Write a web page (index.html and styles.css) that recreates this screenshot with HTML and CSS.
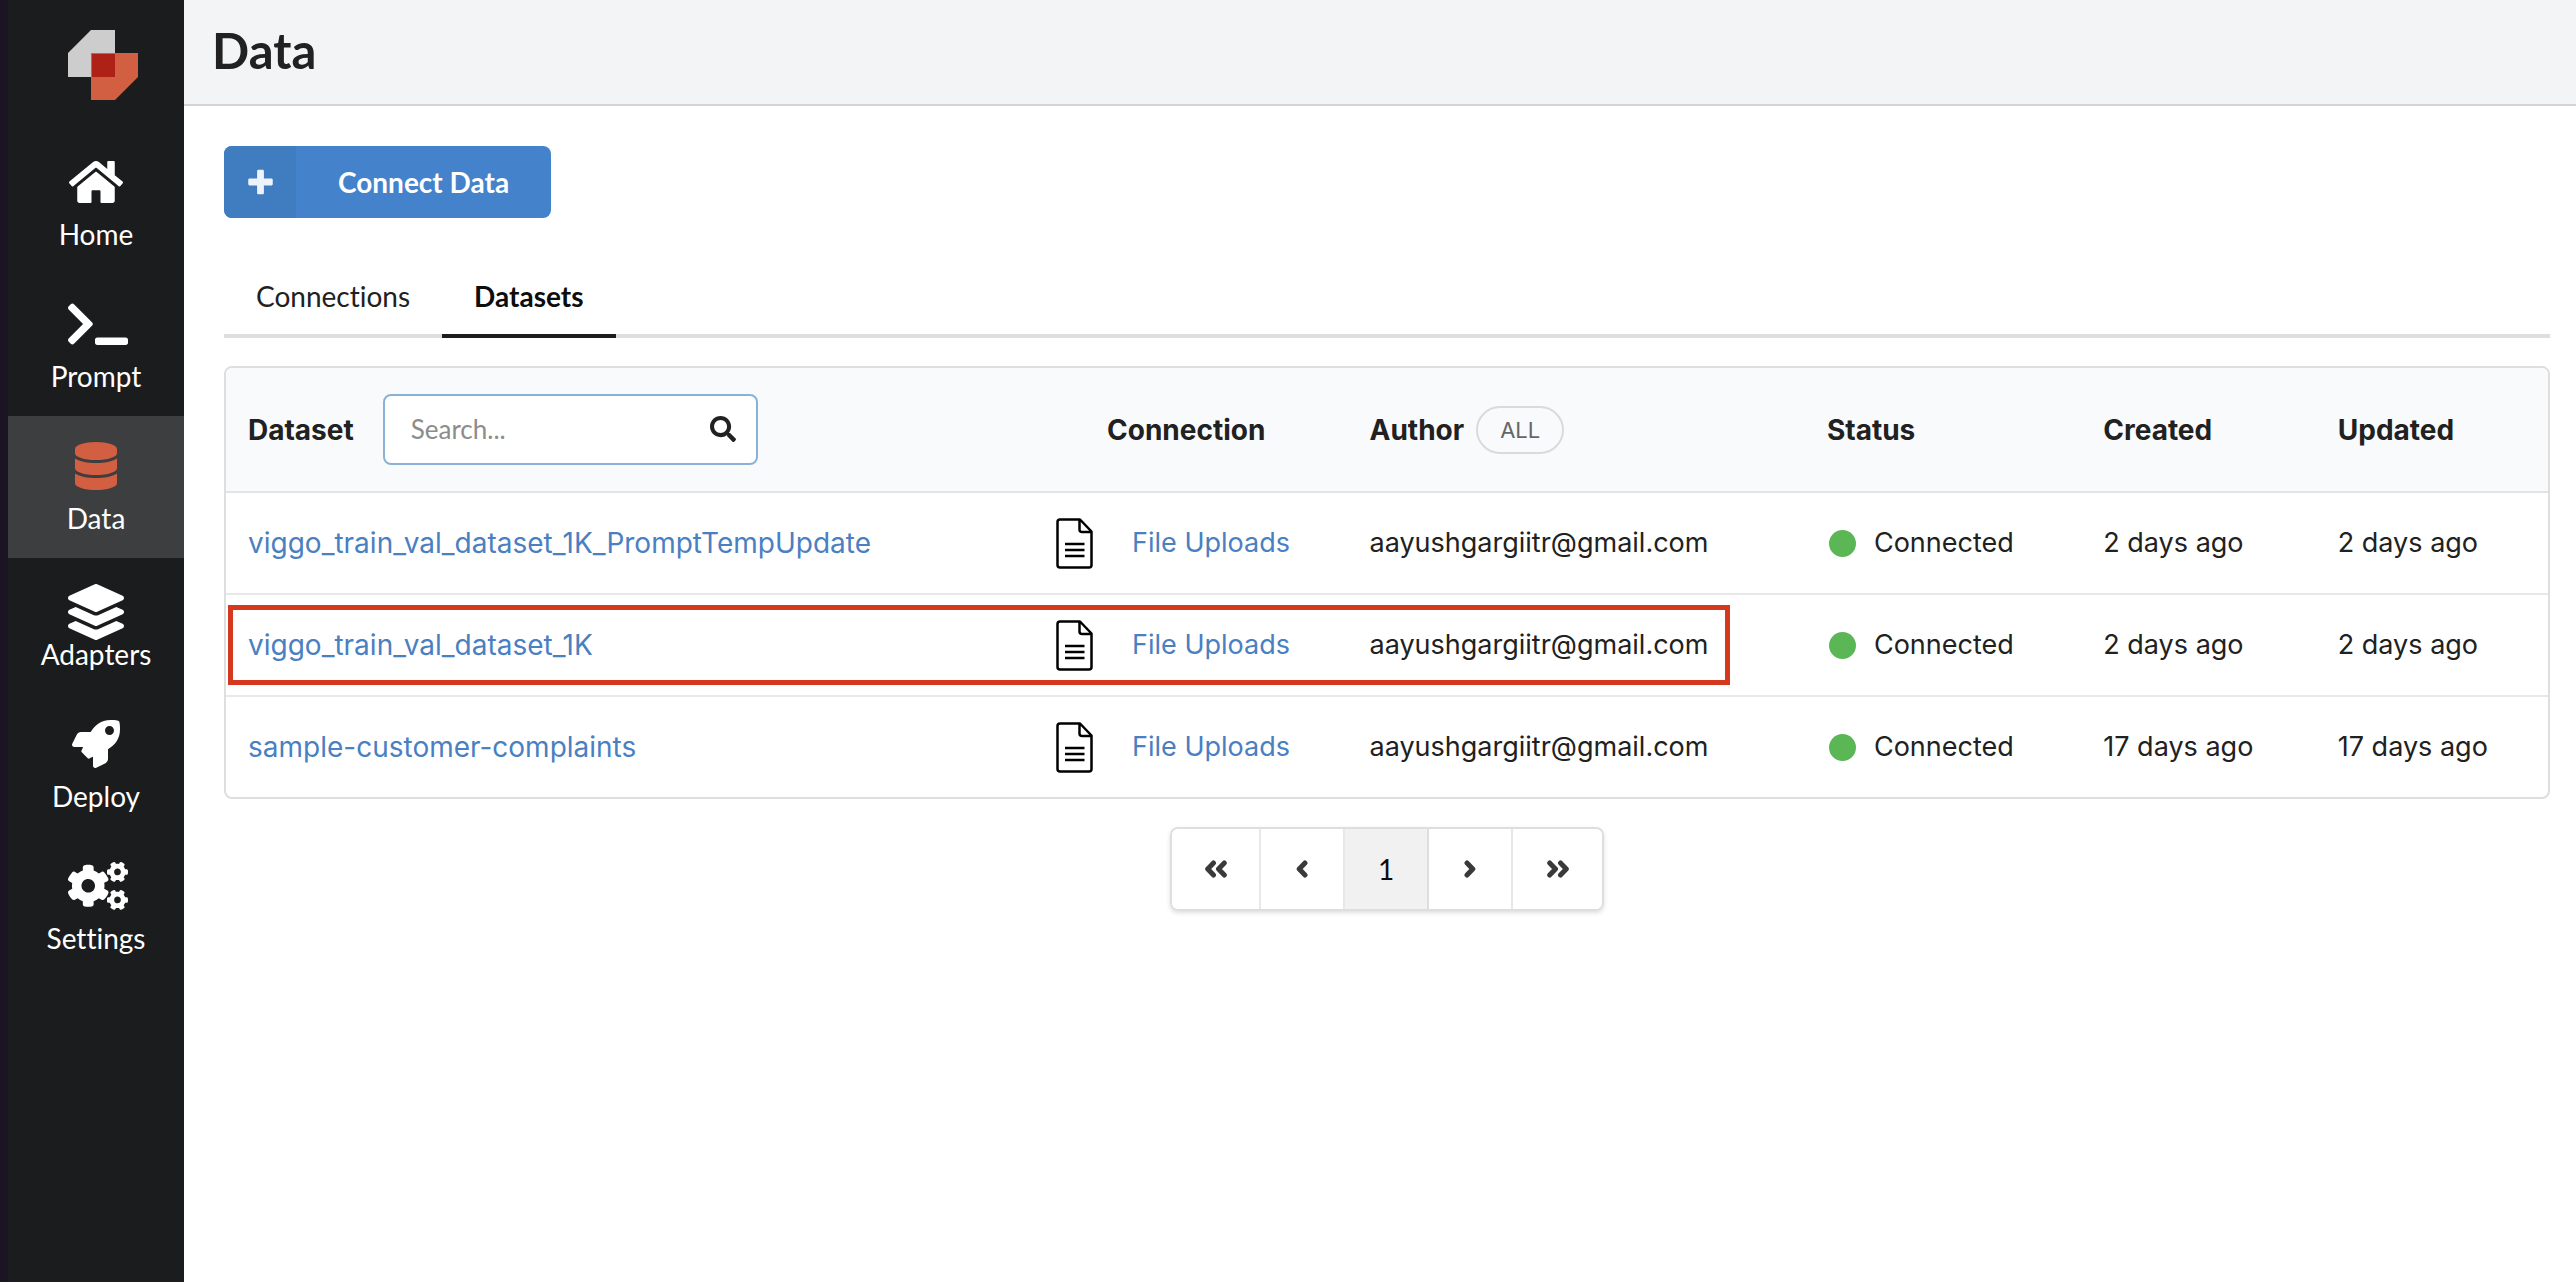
FILE: index.html
```html
<!DOCTYPE html>
<html lang="en">
<head>
<meta charset="utf-8">
<title>Data</title>
<link rel="stylesheet" href="styles.css">
</head>
<body>
<svg class="sprite" aria-hidden="true">
  <symbol id="file" viewBox="0 0 37 51">
    <path d="M4 1.5H24L35.5 13.5V47Q35.5 49.5 33 49.5H4Q1.5 49.5 1.5 47V4Q1.5 1.5 4 1.5ZM23.5 1.5V11.5Q23.5 14 26 14H35.5" fill="none" stroke="#000" stroke-width="2.5" stroke-linejoin="round"/>
    <path d="M9 26H28.5M9 32H28.5M9 38H28.5" stroke="#000" stroke-width="2.5"/>
  </symbol>
</svg>
<div class="app">
  <nav class="sidebar">
    <a class="logo" href="#" aria-label="Home page">
      <svg width="70" height="70" viewBox="0 0 70 70"><path d="M23 0H47V47H0V23Z" fill="#cdcdcd"/><path d="M23 23H70V47L47 70H23Z" fill="#d25f41"/><path d="M24 24H47V47H24Z" fill="#ae2116"/></svg>
    </a>
    <a class="nav-item" href="#">
      <svg width="54" height="48" viewBox="0 0 576 512"><path d="M488 312.7V456c0 13.3-10.7 24-24 24H348c-6.6 0-12-5.4-12-12V356c0-6.6-5.4-12-12-12h-72c-6.6 0-12 5.4-12 12v112c0 6.6-5.4 12-12 12H112c-13.3 0-24-10.7-24-24V312.7c0-3.6 1.6-7 4.4-9.3l188-154.8c4.4-3.6 10.8-3.6 15.3 0l188 154.8c2.7 2.3 4.3 5.7 4.3 9.3zm83.6-60.9L488 182.9V44.4c0-6.6-5.4-12-12-12h-56c-6.6 0-12 5.4-12 12V117l-89.5-73.7c-17.7-14.6-43.3-14.6-61 0L4.4 251.8c-5.1 4.2-5.8 11.8-1.6 16.9l25.5 31c4.2 5.1 11.8 5.8 16.9 1.6l235.2-193.7c4.4-3.6 10.8-3.6 15.3 0l235.2 193.7c5.1 4.2 12.7 3.5 16.9-1.6l25.5-31c4.2-5.2 3.4-12.7-1.7-16.9z"/></svg>
      <span>Home</span>
    </a>
    <a class="nav-item" href="#">
      <svg class="wide" width="60" height="48" viewBox="0 0 640 512"><path d="M257.981 272.971L63.638 467.314c-9.373 9.373-24.569 9.373-33.941 0L7.029 444.647c-9.357-9.357-9.375-24.522-.04-33.901L161.011 256 6.99 101.255c-9.335-9.379-9.317-24.544.04-33.901l22.667-22.667c9.373-9.373 24.569-9.373 33.941 0L257.981 239.03c9.373 9.372 9.373 24.568 0 33.941zM640 456v-32c0-13.255-10.745-24-24-24H312c-13.255 0-24 10.745-24 24v32c0 13.255 10.745 24 24 24h304c13.255 0 24-10.745 24-24z"/></svg>
      <span>Prompt</span>
    </a>
    <a class="nav-item active" href="#" aria-current="page">
      <svg width="42" height="48" viewBox="0 0 448 512"><path d="M448 73.143v45.714C448 159.143 347.667 192 224 192S0 159.143 0 118.857V73.143C0 32.857 100.333 0 224 0s224 32.857 224 73.143zM448 176v102.857C448 319.143 347.667 352 224 352S0 319.143 0 278.857V176c48.125 33.143 136.208 48.572 224 48.572S399.874 209.143 448 176zm0 160v102.857C448 479.143 347.667 512 224 512S0 479.143 0 438.857V336c48.125 33.143 136.208 48.572 224 48.572S399.874 369.143 448 336z"/></svg>
      <span>Data</span>
    </a>
    <a class="nav-item compact" href="#">
      <svg width="56" height="56" viewBox="0 0 512 512"><path d="M12.41 148.02l232.94 105.67c6.8 3.09 14.49 3.09 21.29 0l232.94-105.67c16.55-7.51 16.55-32.52 0-40.03L266.65 2.31a25.607 25.607 0 0 0-21.29 0L12.41 107.98c-16.55 7.51-16.55 32.53 0 40.04zm487.18 88.28l-58.09-26.33-161.64 73.27c-7.56 3.43-15.59 5.17-23.86 5.17s-16.29-1.74-23.86-5.17L70.51 209.97l-58.1 26.33c-16.55 7.5-16.55 32.5 0 40l232.94 105.59c6.8 3.08 14.49 3.08 21.29 0L499.59 276.3c16.55-7.5 16.55-32.5 0-40zm0 127.8l-57.87-26.23-161.86 73.37c-7.56 3.43-15.59 5.17-23.86 5.17s-16.29-1.74-23.86-5.17L70.29 337.87 12.41 364.1c-16.55 7.5-16.55 32.5 0 40l232.94 105.59c6.8 3.08 14.49 3.08 21.29 0L499.59 404.1c16.55-7.5 16.55-32.5 0-40z"/></svg>
      <span>Adapters</span>
    </a>
    <a class="nav-item" href="#">
      <svg width="48" height="48" viewBox="0 0 512 512"><path d="M505.1 19.1C503.8 13 499 8.2 492.9 6.9 460.7 0 435.5 0 410.4 0 307.2 0 245.3 55.2 199.1 128H94.9c-18.2 0-34.8 10.3-42.9 26.5L2.6 253.3c-8 16 3.6 34.7 21.5 34.7h95.1c-5.9 12.8-11.9 25.5-18 37.7-3.1 6.2-1.9 13.6 3 18.5l63.6 63.6c4.9 4.9 12.3 6.1 18.5 3 12.2-6.1 24.9-12 37.7-17.9V488c0 17.8 18.8 29.4 34.7 21.5l98.7-49.4c16.3-8.1 26.5-24.8 26.5-42.9V312.8c72.6-46.3 128-108.4 128-211.1.1-25.2.1-50.4-6.8-82.6zM400 160c-26.5 0-48-21.5-48-48s21.5-48 48-48 48 21.5 48 48-21.5 48-48 48z"/></svg>
      <span>Deploy</span>
    </a>
    <a class="nav-item" href="#">
      <svg class="wide" width="60" height="48" viewBox="0 0 640 512"><path d="M512.1 191l-8.2 14.3c-3 5.3-9.4 7.5-15.1 5.4-11.8-4.4-22.6-10.7-32.1-18.6-4.6-3.8-5.8-10.5-2.8-15.7l8.2-14.3c-6.9-8-12.3-17.3-15.9-27.4h-16.5c-6 0-11.2-4.3-12.2-10.3-2-12-2.1-24.6 0-37.1 1-6 6.2-10.4 12.2-10.4h16.5c3.6-10.1 9-19.4 15.9-27.4l-8.2-14.3c-3-5.2-1.9-11.9 2.8-15.7 9.5-7.9 20.4-14.2 32.1-18.6 5.7-2.1 12.1.1 15.1 5.4l8.2 14.3c10.5-1.9 21.2-1.9 31.7 0L552 6.3c3-5.3 9.4-7.5 15.1-5.4 11.8 4.4 22.6 10.7 32.1 18.6 4.6 3.8 5.8 10.5 2.8 15.7l-8.2 14.3c6.9 8 12.3 17.3 15.9 27.4h16.5c6 0 11.2 4.3 12.2 10.3 2 12 2.1 24.6 0 37.1-1 6-6.2 10.4-12.2 10.4h-16.5c-3.6 10.1-9 19.4-15.9 27.4l8.2 14.3c3 5.2 1.9 11.9-2.8 15.7-9.5 7.9-20.4 14.2-32.1 18.6-5.7 2.1-12.1-.1-15.1-5.4l-8.2-14.3c-10.4 1.9-21.2 1.9-31.7 0zm-10.5-58.8c38.5 29.6 82.4-14.3 52.8-52.8-38.5-29.7-82.4 14.3-52.8 52.8zM386.3 286.1l33.7 16.8c10.1 5.8 14.5 18.1 10.5 29.1-8.9 24.2-26.4 46.4-42.6 65.8-7.4 8.9-20.2 11.1-30.3 5.3l-29.1-16.8c-16 13.7-34.6 24.6-54.9 31.7v33.6c0 11.6-8.3 21.6-19.7 23.6-24.6 4.2-50.4 4.4-75.9 0-11.5-2-20-11.9-20-23.6V418c-20.3-7.2-38.9-18-54.9-31.7L74 403c-10 5.8-22.9 3.6-30.3-5.3-16.2-19.4-33.3-41.6-42.2-65.7-4-10.9.4-23.2 10.5-29.1l33.3-16.8c-3.9-20.9-3.9-42.4 0-63.4L12 205.8c-10.1-5.8-14.6-18.1-10.5-29 8.9-24.2 26-46.4 42.2-65.8 7.4-8.9 20.2-11.1 30.3-5.3l29.1 16.8c16-13.7 34.6-24.6 54.9-31.7V57.1c0-11.5 8.2-21.5 19.6-23.5 24.6-4.2 50.5-4.4 76-.1 11.5 2 20 11.9 20 23.6v33.6c20.3 7.2 38.9 18 54.9 31.7l29.1-16.8c10-5.8 22.9-3.6 30.3 5.3 16.2 19.4 33.2 41.6 42.1 65.8 4 10.9.1 23.2-10 29.1l-33.7 16.8c3.9 21 3.9 42.5 0 63.5zm-117.6 21.1c59.2-77-28.7-164.9-105.7-105.7-59.2 77 28.7 164.9 105.7 105.7zm243.4 182.7l-8.2 14.3c-3 5.3-9.4 7.5-15.1 5.4-11.8-4.4-22.6-10.7-32.1-18.6-4.6-3.8-5.8-10.5-2.8-15.7l8.2-14.3c-6.9-8-12.3-17.3-15.9-27.4h-16.5c-6 0-11.2-4.3-12.2-10.3-2-12-2.1-24.6 0-37.1 1-6 6.2-10.4 12.2-10.4h16.5c3.6-10.1 9-19.4 15.9-27.4l-8.2-14.3c-3-5.2-1.9-11.9 2.8-15.7 9.5-7.9 20.4-14.2 32.1-18.6 5.7-2.1 12.1.1 15.1 5.4l8.2 14.3c10.5-1.9 21.2-1.9 31.7 0l8.2-14.3c3-5.3 9.4-7.5 15.1-5.4 11.8 4.4 22.6 10.7 32.1 18.6 4.6 3.8 5.8 10.5 2.8 15.7l-8.2 14.3c6.9 8 12.3 17.3 15.9 27.4h16.5c6 0 11.2 4.3 12.2 10.3 2 12 2.1 24.6 0 37.1-1 6-6.2 10.4-12.2 10.4h-16.5c-3.6 10.1-9 19.4-15.9 27.4l8.2 14.3c3 5.2 1.9 11.9-2.8 15.7-9.5 7.9-20.4 14.2-32.1 18.6-5.7 2.1-12.1-.1-15.1-5.4l-8.2-14.3c-10.4 1.9-21.2 1.9-31.7 0zM501.6 431c38.5 29.6 82.4-14.3 52.8-52.8-38.5-29.6-82.4 14.3-52.8 52.8z"/></svg>
      <span>Settings</span>
    </a>
  </nav>
  <div class="page">
    <header class="page-header"><h1>Data</h1></header>
    <main class="content">
      <button class="connect" type="button">
        <span class="connect-icon"><svg width="25" height="28" viewBox="0 0 448 512"><path d="M448 294.2v-76.4c0-13.3-10.7-24-24-24H286.2V56c0-13.3-10.7-24-24-24h-76.4c-13.3 0-24 10.7-24 24v137.8H24c-13.3 0-24 10.7-24 24v76.4c0 13.3 10.7 24 24 24h137.8V456c0 13.3 10.7 24 24 24h76.4c13.3 0 24-10.7 24-24V318.2H424c13.3 0 24-10.7 24-24z"/></svg></span>
        <span class="connect-label">Connect Data</span>
      </button>
      <div class="tabs">
        <a class="tab" href="#">Connections</a>
        <a class="tab selected" href="#" aria-current="true">Datasets</a>
      </div>
      <table class="datasets">
        <colgroup><col class="c-dataset"><col class="c-connection"><col class="c-author"><col class="c-status"><col class="c-created"><col class="c-updated"></colgroup>
        <thead>
          <tr>
            <th scope="col"><div class="dataset-head">
              <label for="search">Dataset</label>
              <div class="search">
                <input id="search" type="text" placeholder="Search...">
                <svg width="26" height="26" viewBox="0 0 512 512"><path d="M505 442.7L405.3 343c-4.5-4.5-10.6-7-17-7H372c27.6-35.3 44-79.7 44-128C416 93.1 322.9 0 208 0S0 93.1 0 208s93.1 208 208 208c48.3 0 92.7-16.4 128-44v16.3c0 6.4 2.5 12.5 7 17l99.7 99.7c9.4 9.4 24.6 9.4 33.9 0l28.3-28.3c9.4-9.4 9.4-24.6.1-34zM208 336c-70.7 0-128-57.2-128-128 0-70.7 57.2-128 128-128 70.7 0 128 57.2 128 128 0 70.7-57.2 128-128 128z"/></svg>
              </div>
            </div></th>
            <th scope="col" class="connection-head">Connection</th>
            <th scope="col"><div class="author-head">Author <button class="pill" type="button">ALL</button></div></th>
            <th scope="col">Status</th>
            <th scope="col">Created</th>
            <th scope="col">Updated</th>
          </tr>
        </thead>
        <tbody>
          <tr>
            <td><a href="#">viggo_train_val_dataset_1K_PromptTempUpdate</a></td>
            <td><div class="source"><svg width="37" height="51"><use href="#file"/></svg><a href="#">File Uploads</a></div></td>
            <td>aayushgargiitr@gmail.com</td>
            <td><div class="status">Connected</div></td>
            <td>2 days ago</td>
            <td>2 days ago</td>
          </tr>
          <tr class="marked">
            <td><a href="#">viggo_train_val_dataset_1K</a></td>
            <td><div class="source"><svg width="37" height="51"><use href="#file"/></svg><a href="#">File Uploads</a></div></td>
            <td>aayushgargiitr@gmail.com</td>
            <td><div class="status">Connected</div></td>
            <td>2 days ago</td>
            <td>2 days ago</td>
          </tr>
          <tr>
            <td><a href="#">sample-customer-complaints</a></td>
            <td><div class="source"><svg width="37" height="51"><use href="#file"/></svg><a href="#">File Uploads</a></div></td>
            <td>aayushgargiitr@gmail.com</td>
            <td><div class="status">Connected</div></td>
            <td>17 days ago</td>
            <td>17 days ago</td>
          </tr>
        </tbody>
      </table>
      <nav class="pager" aria-label="Pages">
        <button type="button" aria-label="First page"><svg width="22" height="18" viewBox="0 0 22 18"><path d="M8.5 3L2.7 9L8.5 15M19.3 3L13.5 9L19.3 15"/></svg></button>
        <button type="button" aria-label="Previous page"><svg width="12" height="18" viewBox="0 0 12 18"><path d="M9 3L3.2 9L9 15"/></svg></button>
        <button type="button" class="current" aria-current="page">1</button>
        <button type="button" aria-label="Next page"><svg width="12" height="18" viewBox="0 0 12 18"><path d="M3 3L8.8 9L3 15"/></svg></button>
        <button type="button" aria-label="Last page"><svg width="22" height="18" viewBox="0 0 22 18"><path d="M2.7 3L8.5 9L2.7 15M13.5 3L19.3 9L13.5 15"/></svg></button>
      </nav>
    </main>
  </div>
</div>
</body>
</html>
```
FILE: styles.css
```css
*, *::before, *::after { box-sizing: border-box; }

body {
  margin: 0;
  background: #fff;
  color: #212121;
  font: 28px/40px Lato, "Liberation Sans", sans-serif;
  font-variant-ligatures: none;
}

a { color: #4a7fc1; text-decoration: none; }
button, input { font: inherit; }
svg { display: block; flex: none; }
.sprite { position: absolute; width: 0; height: 0; }

.app { display: flex; min-height: 100vh; }

/* Sidebar */
.sidebar {
  display: flex;
  flex: none;
  flex-direction: column;
  width: 184px;
  border-left: 8px solid #1a1424;
  background: #1b1c1d;
}
.logo { padding: 30px 0 32px 60px; }
.nav-item {
  display: flex;
  flex-direction: column;
  align-items: center;
  gap: 8px;
  height: 142px;
  padding-top: 26px;
  color: #fff;
}
.nav-item svg { fill: #fff; }
.nav-item .wide { margin-left: 4px; }
.nav-item.active { background: #3d3e3f; }
.nav-item.active svg { fill: #d25f41; }
.nav-item.compact { gap: 0; height: 136px; }
.nav-item.compact span { margin-top: -6px; }

/* Page header */
.page { flex: 1; min-width: 0; }
.page-header {
  padding: 20px 28px 24px;
  border-bottom: 2px solid #d4d4d5;
  background: #f3f4f5;
}
.page-header h1 { margin: 0; font-size: 49px; line-height: 60px; }

.content {
  display: flex;
  flex-direction: column;
  align-items: flex-start;
  padding: 40px 26px 40px 40px;
}

/* Connect button */
.connect {
  display: flex;
  overflow: hidden;
  height: 72px;
  padding: 0;
  border: 0;
  border-radius: 8px;
  background: #4483cb;
  color: #fff;
  font-weight: 700;
}
.connect-icon {
  display: flex;
  align-items: center;
  justify-content: center;
  width: 72px;
  height: 72px;
  background: #407cc0;
}
.connect-icon svg { fill: #edf3fb; }
.connect-label { padding: 0 42px; line-height: 72px; }

/* Tabs */
.tabs {
  display: flex;
  align-self: stretch;
  margin: 40px 0 28px;
  border-bottom: 4px solid #dededf;
}
.tab {
  margin-bottom: -4px;
  padding: 18px 32px;
  border-bottom: 4px solid transparent;
  color: #212121;
}
.tab.selected { border-color: #1b1c1d; color: #0d0d0d; font-weight: 700; }

/* Dataset table */
.datasets {
  width: 100%;
  table-layout: fixed;
  border: 2px solid #dededf;
  border-spacing: 0;
  border-radius: 8px;
  font: 27px/36px Inter, "Liberation Sans", sans-serif;
}
.c-dataset { width: 34.8%; }
.c-connection { width: 13.5%; }
.c-author { width: 19.7%; }
.c-status { width: 11.9%; }
.c-created { width: 10.1%; }
.datasets th, .datasets td { padding: 0 22px; text-align: left; white-space: nowrap; }
.datasets th, .datasets td:first-child { font-size: 28px; }
.datasets th { height: 125px; border-bottom: 2px solid #e2e3e4; background: #f9fafb; font-weight: 700; }
.datasets th:first-child { border-top-left-radius: 6px; }
.datasets th:last-child { border-top-right-radius: 6px; }
.datasets td { height: 102px; border-bottom: 2px solid #e8e8e9; }
.datasets tbody tr:last-child td { height: 100px; border-bottom: 0; }
.datasets .connection-head { padding-left: 73px; }

.dataset-head { display: flex; align-items: center; gap: 29px; }
.search { position: relative; width: 375px; }
.search input {
  display: block;
  width: 100%;
  height: 71px;
  padding: 0 70px 2px 26px;
  border: 2px solid #8ab2d8;
  border-radius: 8px;
  background: #fff;
  font: 26px Lato, "Liberation Sans", sans-serif;
}
.search input::placeholder { color: #8c8c8c; opacity: 1; }
.search svg { position: absolute; top: 22px; right: 22px; fill: #212121; }

.author-head { display: flex; align-items: center; gap: 12px; }
.pill {
  height: 48px;
  padding: 0 22px;
  border: 2px solid #d9dadb;
  border-radius: 24px;
  background: transparent;
  color: #666;
  font: 22px Inter, "Liberation Sans", sans-serif;
}

.source { display: flex; align-items: center; gap: 39px; }
.status { display: flex; align-items: center; gap: 18px; }
.status::before {
  width: 27px;
  height: 27px;
  margin-left: 2px;
  border-radius: 50%;
  background: #5bb656;
  content: "";
}

/* Outline round the marked row, up to the end of the author column */
.marked { position: relative; }
.marked td:first-child::after {
  position: absolute;
  top: 10px;
  bottom: 12px;
  left: 2px;
  width: 64.7%;
  border: 5px solid #d4391f;
  content: "";
}

/* Pager */
.pager {
  display: flex;
  align-self: center;
  overflow: hidden;
  margin-top: 28px;
  border: 2px solid #dededf;
  border-radius: 8px;
  box-shadow: 0 2px 4px #22242626;
}
.pager button {
  display: flex;
  align-items: center;
  justify-content: center;
  width: 84px;
  height: 80px;
  padding: 0;
  border: 0;
  border-right: 2px solid #e8e8e9;
  background: #fff;
  color: #0d0d0d;
}
.pager button:first-child, .pager button:last-child { width: 89px; }
.pager button:last-child { border-right: 0; }
.pager .current { border-color: #dededf; background: #f1f1f1; }
.pager path { fill: none; stroke: #3a3a3a; stroke-width: 5; stroke-linecap: round; stroke-linejoin: round; }
```
